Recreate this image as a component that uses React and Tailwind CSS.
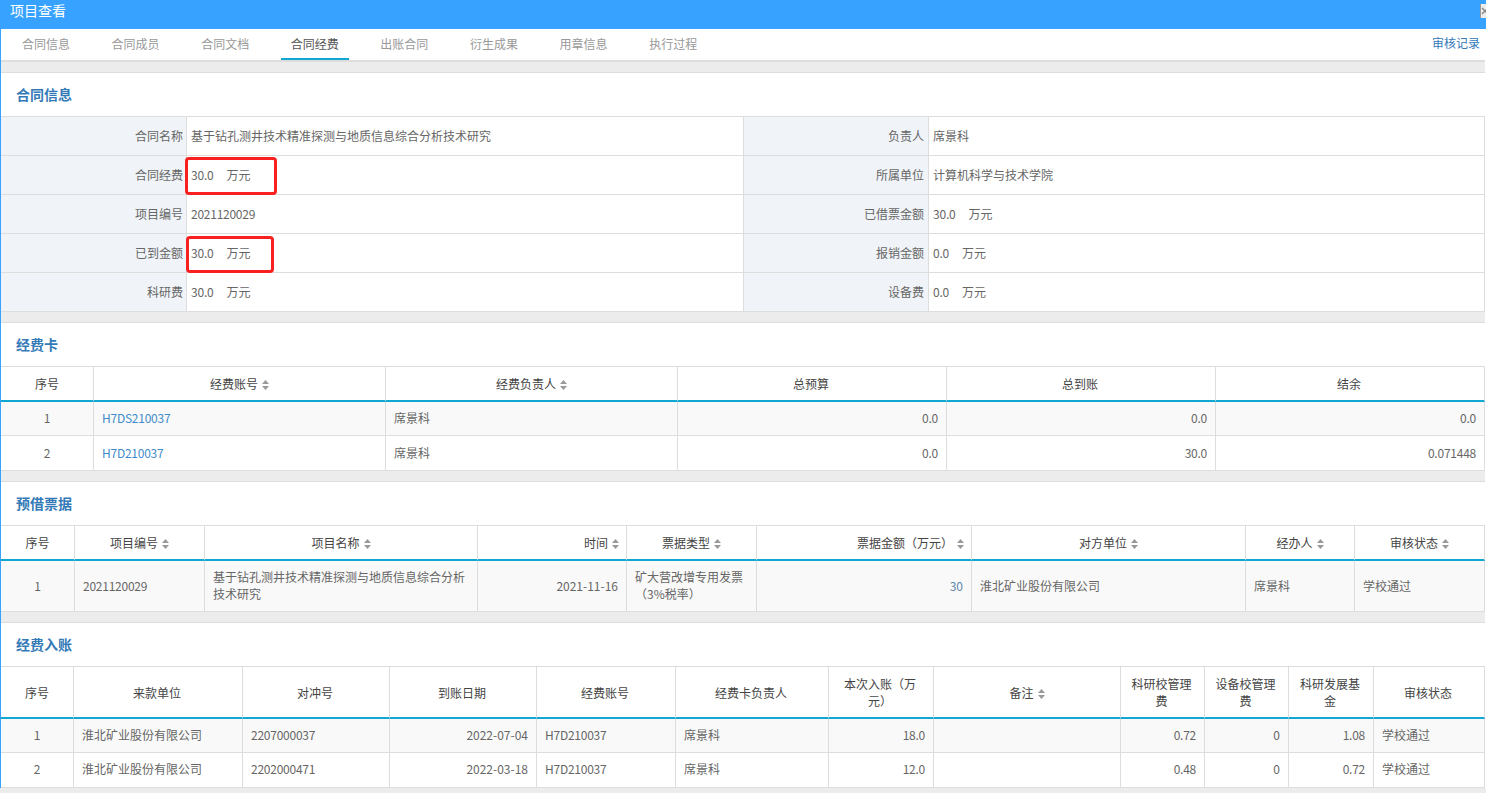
const border = "border-r border-b border-[#dddddd]";

function Sort() {
  return (
    <svg width="7" height="10" viewBox="0 0 7 10" className="inline-block ml-[4px] align-[-1px]">
      <path d="M3.5 0 L7 4 H0 Z M0 6 H7 L3.5 10 Z" fill="#999999" />
    </svg>
  );
}

function Card({ title, children }) {
  return (
    <section className="bg-white border-t border-[#dddddd] mb-[10px]">
      <h3 className="h-[44px] pl-[15px] flex items-center text-[14px] font-bold text-[#337ab7] border-b border-[#dddddd]">{title}</h3>
      {children}
    </section>
  );
}

function InfoRow({ a, b, c, d }) {
  const label = `${border} bg-[#f0f4f8] text-right pr-[3px] text-[#666666]`;
  const labelRight = `${border} bg-[#f0f4f8] text-right pr-[4px] text-[#666666]`;
  const value = `${border} pl-[4px] text-[#666666]`;
  return (
    <tr>
      <td className={`${label} h-[39px]`}>{a}</td>
      <td className={value}>{b}</td>
      <td className={labelRight}>{c}</td>
      <td className={value}>{d}</td>
    </tr>
  );
}

function Money({ v }) {
  return <><span className="tracking-[-0.2px]">{v}</span><span className="ml-[13px]">万元</span></>;
}

const isTight = (c) => typeof c === "string" && /^(\d{10}|H7.*|\d+\.\d+)$/.test(c);

function headClass(h, i) {
  if (h.r) return "text-right pl-2 pr-[7px]";
  if (h.s || i === 0) return "text-center px-2";
  return "text-center pl-2 pr-[10px]";
}

function DataTable({ cols, headH, heads, rows }) {
  return (
    <table className="w-[1484px] table-fixed border-separate border-spacing-0">
      <colgroup>
        {cols.map((w, i) => <col key={i} style={{ width: w }} />)}
      </colgroup>
      <thead>
        <tr>
          {heads.map((h, i) => (
            <th
              key={i}
              style={{ height: headH }}
              className={`border-r border-b-2 border-r-[#dddddd] border-b-[#10a7d3] font-normal text-[#444444] leading-[17px] ${headClass(h, i)}`}
            >
              {h.t}{h.s ? <Sort /> : null}
            </th>
          ))}
        </tr>
      </thead>
      <tbody>
        {rows.map((r, ri) => (
          <tr key={ri} className={ri % 2 === 0 ? "bg-[#f9f9f9]" : "bg-white"}>
            {r.cells.map((c, i) => {
              const h = heads[i];
              return (
                <td
                  key={i}
                  style={{ height: r.h }}
                  className={`${border} px-2 ${r.up ? "pb-[4px]" : "pb-[2px]"} leading-[17px] ${h.a === "r" ? "text-right" : h.a === "c" ? "text-center" : "text-left"} ${h.link ? "text-[#428bca]" : "text-[#666666]"} ${isTight(c) ? "tracking-[-0.24px]" : ""}`}
                >
                  {c}
                </td>
              );
            })}
          </tr>
        ))}
      </tbody>
    </table>
  );
}

const tabs = ["合同信息", "合同成员", "合同文档", "合同经费", "出账合同", "衍生成果", "用章信息", "执行过程"];

const t3Title = "基于钻孔测井技术精准探测与地质信息综合分析技术研究";

export default function App() {
  return (
    <div className="relative h-[793px] w-[1486px] overflow-hidden bg-[#ececec] text-[12px] font-['Noto_Sans_CJK_SC','Noto_Sans',sans-serif]">
      <header className="h-[29px] bg-[#37a2ff] flex items-start justify-between pl-[10px]">
        <span className="text-[14px] leading-[21px] text-white">项目查看</span>
        <span className="mt-[4px] w-[6px] h-[14px] bg-[#eeeeee] border-l border-[#999999] overflow-hidden">
          <svg width="6" height="14" viewBox="0 0 6 14" className="block">
            <path d="M1 4 L7 10 M7 4 L1 10" stroke="#888888" strokeWidth="1.5" />
          </svg>
        </span>
      </header>

      <div className="border-l border-l-[#37a2ff] border-r border-r-white">
        <nav className="h-[33px] bg-white border-b-2 border-[#dddddd] flex items-stretch justify-between pl-[11px] pr-[5px]">
          <ul className="flex gap-[21.6px]">
            {tabs.map((t, i) => (
              <li
                key={t}
                className={`w-[68px] h-[31px] text-center leading-[30px] ${i === 3 ? "text-[#555555] border-b-2 border-[#10a7d3]" : "text-[#999999]"}`}
              >
                {t}
              </li>
            ))}
          </ul>
          <a className="leading-[28px] text-[#337ab7]">审核记录</a>
        </nav>

        <div className="pt-[10px]">
          <Card title="合同信息">
            <table className="w-[1484px] table-fixed border-separate border-spacing-0">
              <colgroup>
                <col className="w-[186px]" />
                <col className="w-[557px]" />
                <col className="w-[185px]" />
                <col className="w-[556px]" />
              </colgroup>
              <tbody>
                <InfoRow a="合同名称" b={t3Title} c="负责人" d="席景科" />
                <InfoRow a="合同经费" b={<Money v="30.0" />} c="所属单位" d="计算机科学与技术学院" />
                <InfoRow a="项目编号" b={<span className="tracking-[-0.25px]">2021120029</span>} c="已借票金额" d={<Money v="30.0" />} />
                <InfoRow a="已到金额" b={<Money v="30.0" />} c="报销金额" d={<Money v="0.0" />} />
                <InfoRow a="科研费" b={<Money v="30.0" />} c="设备费" d={<Money v="0.0" />} />
              </tbody>
            </table>
          </Card>

          <Card title="经费卡">
            <DataTable
              cols={[93, 292, 292, 269, 269, 269]}
              headH={35}
              heads={[
                { t: "序号", a: "c" },
                { t: "经费账号", s: 1, link: 1 },
                { t: "经费负责人", s: 1 },
                { t: "总预算", a: "r" },
                { t: "总到账", a: "r" },
                { t: "结余", a: "r" },
              ]}
              rows={[
                { h: 34, cells: ["1", "H7DS210037", "席景科", "0.0", "0.0", "0.0"] },
                { h: 35, cells: ["2", "H7D210037", "席景科", "0.0", "30.0", "0.071448"] },
              ]}
            />
          </Card>

          <Card title="预借票据">
            <DataTable
              cols={[74, 130, 273, 149, 130, 215, 274, 109, 130]}
              headH={35}
              heads={[
                { t: "序号", a: "c" },
                { t: "项目编号", s: 1 },
                { t: "项目名称", s: 1 },
                { t: "时间", s: 1, a: "r", r: 1 },
                { t: "票据类型", s: 1 },
                { t: "票据金额（万元）", s: 1, a: "r", r: 1 },
                { t: "对方单位", s: 1 },
                { t: "经办人", s: 1 },
                { t: "审核状态", s: 1 },
              ]}
              rows={[
                {
                  h: 51,
                  cells: ["1", "2021120029", t3Title, "2021-11-16", "矿大营改增专用发票（3%税率）", <span className="text-[#5b86ad]">30</span>, "淮北矿业股份有限公司", "席景科", "学校通过"],
                },
              ]}
            />
          </Card>

          <Card title="经费入账">
            <DataTable
              cols={[73, 169, 147, 147, 139, 153, 105, 187, 84, 84, 85, 111]}
              headH={52}
              heads={[
                { t: "序号", a: "c" },
                { t: "来款单位" },
                { t: "对冲号" },
                { t: "到账日期", a: "r" },
                { t: "经费账号" },
                { t: "经费卡负责人" },
                { t: "本次入账（万元）", a: "r" },
                { t: "备注", s: 1 },
                { t: "科研校管理费", a: "r" },
                { t: "设备校管理费", a: "r" },
                { t: "科研发展基金", a: "r" },
                { t: "审核状态" },
              ]}
              rows={[
                { h: 34, cells: ["1", "淮北矿业股份有限公司", "2207000037", "2022-07-04", "H7D210037", "席景科", "18.0", "", "0.72", "0", "1.08", "学校通过"] },
                { h: 35, up: 1, cells: ["2", "淮北矿业股份有限公司", "2202000471", "2022-03-18", "H7D210037", "席景科", "12.0", "", "0.48", "0", "0.72", "学校通过"] },
              ]}
            />
          </Card>
        </div>
      </div>

      <div className="absolute left-[185px] top-[157px] w-[92px] h-[38px] border-[3px] border-[#f92020] rounded-[4px]" />
      <div className="absolute left-[186px] top-[236px] w-[88px] h-[37px] border-[3px] border-[#f92020] rounded-[4px]" />
    </div>
  );
}
